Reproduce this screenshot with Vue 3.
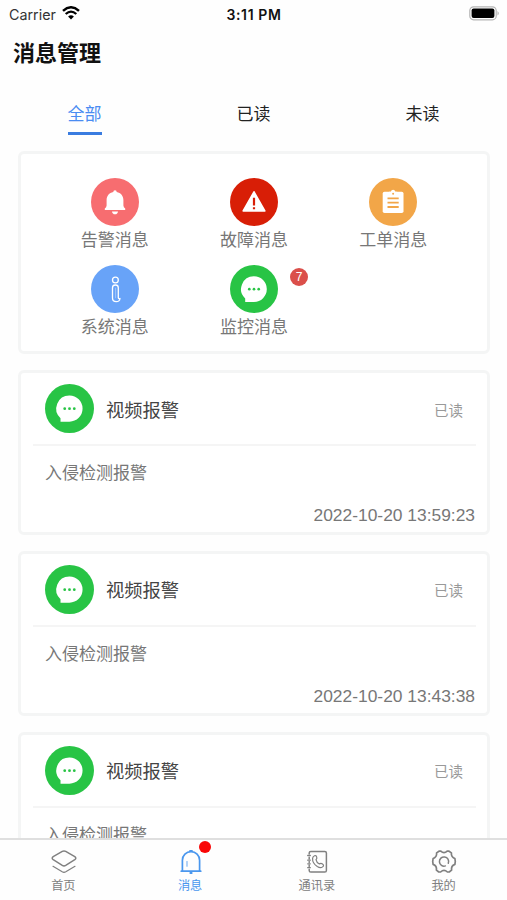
<script setup>
import { ref } from 'vue'

const tabs = ['全部', '已读', '未读']
const activeTab = ref(0)

const categories = [
  { name: '告警消息', icon: 'bell', color: '#f76d70' },
  { name: '故障消息', icon: 'warn', color: '#d81e06' },
  { name: '工单消息', icon: 'order', color: '#f2a648' },
  { name: '系统消息', icon: 'info', color: '#68a3f8' },
  { name: '监控消息', icon: 'chat', color: '#28c445', count: 7 }
]

const messages = [
  { id: 1, title: '视频报警', status: '已读', content: '入侵检测报警', time: '2022-10-20 13:59:23' },
  { id: 2, title: '视频报警', status: '已读', content: '入侵检测报警', time: '2022-10-20 13:43:38' },
  { id: 3, title: '视频报警', status: '已读', content: '入侵检测报警' }
]

const navs = [
  { name: '首页', icon: 'home' },
  { name: '消息', icon: 'message', dot: true },
  { name: '通讯录', icon: 'contacts' },
  { name: '我的', icon: 'mine' }
]
const activeNav = ref(1)
</script>

<template>
  <div class="page">
    <div class="status-bar">
      <div class="carrier">
        <span class="carrier-name">Carrier</span>
        <svg class="wifi" viewBox="0 0 18 14">
          <path d="M1 4.9 Q9 -2.3 17 4.9" fill="none" stroke="#000" stroke-width="2.5" />
          <path d="M3.7 8 Q9 3.2 14.3 8" fill="none" stroke="#000" stroke-width="2.3" />
          <path d="M6.1 10.4 Q9 7.9 11.9 10.4 L9 13.4 Z" fill="#000" />
        </svg>
      </div>
      <div class="clock">3:11 PM</div>
      <div class="battery">
        <svg viewBox="0 0 31 15">
          <rect x="0.8" y="0.8" width="26.4" height="13" rx="3.8" fill="#fff" stroke="#b5b5b5" stroke-width="1.2" />
          <rect x="2.6" y="2.6" width="22.8" height="9.4" rx="2" fill="#000" />
          <path d="M28.6 5 Q30.6 7.3 28.6 9.6 Z" fill="#999" />
        </svg>
      </div>
    </div>

    <h1 class="title">消息管理</h1>

    <div class="tabs">
      <div
        v-for="(tab, index) in tabs"
        :key="tab"
        class="tab"
        :class="{ active: activeTab === index }"
        @click="activeTab = index"
      >
        <span>{{ tab }}</span>
      </div>
    </div>

    <div class="content">
      <div class="card categories">
        <div v-for="item in categories" :key="item.name" class="category">
          <div class="category-icon">
            <svg viewBox="0 0 48 48">
              <circle cx="24" cy="24" r="24" :fill="item.color" />
              <g v-if="item.icon === 'bell'" fill="#fff">
                <path d="M24 12.2 a1.7 1.7 0 0 1 1.7 1.8 C29.9 14.9 32.4 18 32.4 22 V27.5 Q32.5 29.6 34.2 30.6 V32 H13.8 V30.6 Q15.5 29.6 15.6 27.5 V22 C15.6 18 18.1 14.9 22.3 14 A1.7 1.7 0 0 1 24 12.2 Z" />
                <path d="M21 33.4 H27 Q26.6 36.2 24 36.2 T21 33.4 Z" />
              </g>
              <g v-else-if="item.icon === 'warn'">
                <path d="M24 13.8 L34.8 33 H13.2 Z" fill="#fff" stroke="#fff" stroke-width="1.6" stroke-linejoin="round" />
                <path d="M24 19.7 V27.6 M24 29.3 V31.2" stroke="#d81e06" stroke-width="2.2" />
              </g>
              <g v-else-if="item.icon === 'order'">
                <rect x="13.7" y="13.8" width="20.8" height="21.2" rx="1.8" fill="#fff" />
                <path d="M20 15 V13.7 H21.8 Q22.3 11.7 24.1 11.7 T26.4 13.7 H28.2 V15 Z" fill="#fff" />
                <circle cx="24.1" cy="15.7" r="1" fill="#f2a648" />
                <path d="M18.5 20.3 H29.7 M18.5 24.7 H29.7 M18.5 29 H29.7" stroke="#f2a648" stroke-width="1.8" />
              </g>
              <g v-else-if="item.icon === 'info'" fill="none" stroke="#fff" stroke-width="1.3">
                <circle cx="24.4" cy="15" r="2.9" />
                <path d="M21.5 22.8 Q21.5 20 24.4 20 T27.3 22.8 V32.4 Q27.3 34 29 33.5 Q28.6 36.7 25.3 36.7 Q21.5 36.7 21.5 33 Z" stroke-linejoin="round" />
                <path d="M24.6 22.7 V33.2" stroke-width="0.7" opacity="0.55" />
              </g>
              <g v-else>
                <path d="M24 11.3 A12.8 12.8 0 1 1 24 36.9 H15.2 V33.5 A12.8 12.8 0 0 1 24 11.3 Z" fill="#fff" />
                <g fill="#28c445">
                  <circle cx="19.3" cy="24.2" r="1.35" />
                  <circle cx="24" cy="24.2" r="1.35" />
                  <circle cx="28.7" cy="24.2" r="1.35" />
                </g>
              </g>
            </svg>
            <span v-if="item.count" class="badge">{{ item.count }}</span>
          </div>
          <div class="category-name">{{ item.name }}</div>
        </div>
      </div>

      <div v-for="msg in messages" :key="msg.id" class="card message">
        <div class="message-head">
          <svg class="message-icon" viewBox="0 0 48 48">
            <circle cx="24" cy="24" r="24" fill="#28c445" />
            <path d="M24 11.3 A12.8 12.8 0 1 1 24 36.9 H15.2 V33.5 A12.8 12.8 0 0 1 24 11.3 Z" fill="#fff" />
            <g fill="#28c445">
              <circle cx="19.3" cy="24.2" r="1.35" />
              <circle cx="24" cy="24.2" r="1.35" />
              <circle cx="28.7" cy="24.2" r="1.35" />
            </g>
          </svg>
          <span class="message-title">{{ msg.title }}</span>
          <span class="message-status">{{ msg.status }}</span>
        </div>
        <div class="message-content">{{ msg.content }}</div>
        <div v-if="msg.time" class="message-time">{{ msg.time }}</div>
      </div>
    </div>

    <div class="nav">
      <div
        v-for="(item, index) in navs"
        :key="item.name"
        class="nav-item"
        :class="{ active: activeNav === index }"
        @click="activeNav = index"
      >
        <div class="nav-icon">
          <svg viewBox="0 0 26 26" fill="none" stroke="currentColor" stroke-width="1.5" stroke-linejoin="round" stroke-linecap="round">
            <g v-if="item.icon === 'home'">
              <path d="M11.3 2.4 Q13 1.5 14.7 2.4 L23.8 7.6 Q25.8 9.1 23.8 10.7 L14.7 16.4 Q13 17.4 11.3 16.4 L2.2 10.7 Q0.2 9.1 2.2 7.6 Z" />
              <path d="M2 17.3 L11.2 22.8 Q13 23.8 14.8 22.8 L24 17.3" stroke-width="1.2" />
            </g>
            <g v-else-if="item.icon === 'message'">
              <path d="M4.4 21.8 V11.3 A8.6 8.6 0 0 1 21.6 11.3 V21.8" stroke-width="1.7" />
              <path d="M3.3 22.2 H22.7" stroke-width="1.8" />
              <path d="M12 2 H14" stroke-width="1.8" />
              <path d="M12.4 24 H13.6" stroke-width="2" />
              <path d="M9 12.5 V17.2" stroke-width="1.2" opacity="0.7" />
            </g>
            <g v-else-if="item.icon === 'contacts'">
              <path d="M5.2 5 V4 Q5.2 2.4 6.8 2.4 H20.8 Q22.4 2.4 22.4 4 V21.4 Q22.4 23 20.8 23 H6.8 Q5.2 23 5.2 21.4 V20.2 M5.2 8.2 V10 M5.2 12.4 V13.6 M5.2 16 V17.4" />
              <path d="M3.7 6.5 H6.3 M3.7 11.2 H6.3 M3.7 14.8 H6.3 M3.7 18.7 H6.3" stroke-width="1.3" />
              <path d="M10.5 6.7 Q12.1 6.1 12.7 8 Q13.3 9.6 12 10.7 Q12.5 13.6 15.4 15 Q16.8 13.6 18.5 14.9 Q20.5 16.4 18.6 17.9 Q16.5 19.6 13.3 17.6 Q8.2 14 8.6 9.4 Q8.8 7.4 10.5 6.7 Z" stroke-width="1.2" />
            </g>
            <g v-else>
              <path d="M8 2.2 H9.8 Q13 5.2 16.2 2.2 H18 L20.4 3.9 Q20 8.2 23.9 9.6 L24.3 12.5 L23.9 15.4 Q19.9 17 20.6 21.1 L18.2 23 H16.4 Q13 19.8 9.6 23 H7.8 L5.4 21.1 Q6.1 17 2.1 15.4 L1.7 12.5 L2.1 9.6 Q6 8.2 5.6 3.9 Z" stroke-width="1.7" />
              <path d="M14.4 16.9 A4.6 4.6 0 1 1 17.3 14.2" stroke-width="1.5" />
            </g>
          </svg>
          <span v-if="item.dot" class="dot"></span>
        </div>
        <div class="nav-name">{{ item.name }}</div>
      </div>
    </div>
  </div>
</template>

<style>
body {
  margin: 0;
  background: #fff;
}
</style>

<style scoped>
.page {
  display: flex;
  flex-direction: column;
  height: 900px;
  overflow: hidden;
  box-sizing: border-box;
  background: #fefefe;
  font-family: "Liberation Sans", "Noto Sans CJK SC", sans-serif;
}

.status-bar {
  display: grid;
  grid-template-columns: 1fr auto 1fr;
  align-items: center;
  flex: none;
  height: 28px;
  padding: 0 7px 0 9px;
  font-family: Inter, sans-serif;
  font-size: 14px;
  color: #111;
}

.carrier {
  display: flex;
  align-items: center;
  gap: 6px;
}

.carrier-name {
  font-size: 14.3px;
  color: #333;
}

.wifi {
  width: 18px;
  height: 14px;
  margin-top: -2px;
}

.clock {
  font-weight: 600;
  letter-spacing: 0.6px;
  padding-right: 1px;
}

.battery {
  display: flex;
  justify-content: flex-end;
}

.battery svg {
  width: 31px;
  height: 15px;
  margin-top: -2px;
}

.title {
  flex: none;
  margin: 0;
  padding-left: 13px;
  height: 50px;
  line-height: 52px;
  font-size: 22px;
  font-weight: bold;
  color: #111;
}

.tabs {
  display: flex;
  flex: none;
  height: 73px;
}

.tab {
  flex: 1;
  display: flex;
  justify-content: center;
  align-items: flex-start;
  padding-top: 22px;
  font-size: 17px;
  line-height: 30px;
  color: #222;
  cursor: pointer;
}

.tab span {
  height: 32px;
  border-bottom: 3px solid transparent;
}

.tab.active {
  color: #4a8cf2;
}

.tab.active span {
  border-bottom-color: #3a7ce0;
}

.content {
  flex: 1;
  min-height: 0;
  overflow: hidden;
}

.card {
  box-sizing: border-box;
  margin: 0 17px 16px 18px;
  border: 3px solid #f4f5f5;
  border-radius: 6px;
  background: #fff;
}

.categories {
  display: grid;
  grid-template-columns: repeat(3, 139.3px);
  grid-auto-rows: 86.7px;
  justify-content: center;
  height: 203px;
  padding-top: 24px;
}

.category {
  display: flex;
  flex-direction: column;
  align-items: center;
}

.category-icon {
  position: relative;
  height: 48px;
}

.category-icon svg {
  display: block;
  width: 48px;
  height: 48px;
}

.badge {
  position: absolute;
  top: 3px;
  left: 60px;
  width: 18px;
  height: 18px;
  border-radius: 50%;
  background: #db4f4a;
  color: #fff;
  font-size: 12px;
  line-height: 18px;
  text-align: center;
}

.category-name {
  font-size: 17px;
  line-height: 30px;
  color: #777;
}

.message {
  height: 164.8px;
}

.message-head {
  display: flex;
  align-items: center;
  height: 71px;
  margin: 0 11px 0 12px;
  padding: 0 13px 0 12px;
  border-bottom: 2px solid #f5f5f5;
}

.message-icon {
  width: 49px;
  height: 49px;
}

.message-title {
  margin-left: 12px;
  font-size: 18.3px;
  color: #444;
}

.message-status {
  margin-left: auto;
  padding-top: 1px;
  font-size: 14.5px;
  color: #999;
}

.message-content {
  padding: 15px 24px 0;
  font-size: 17px;
  line-height: 26px;
  color: #777;
}

.message-time {
  margin-top: 17px;
  padding-right: 12px;
  font-size: 17.4px;
  line-height: 22px;
  text-align: right;
  color: #777;
}

.nav {
  display: flex;
  flex: none;
  height: 60px;
  border-top: 2px solid #dfdfdf;
  background: #fefefe;
}

.nav-item {
  flex: 1;
  display: flex;
  flex-direction: column;
  align-items: center;
  padding-top: 8px;
  color: #808080;
  cursor: pointer;
}

.nav-item.active {
  color: #4a97ee;
}

.nav-icon {
  position: relative;
  height: 26px;
  padding-top: 1px;
  padding-left: 1px;
}

.nav-icon svg {
  display: block;
  width: 26px;
  height: 26px;
}

.dot {
  position: absolute;
  top: -7px;
  left: 22px;
  width: 12px;
  height: 12px;
  border-radius: 50%;
  background: #f90606;
}

.nav-name {
  margin-top: 2px;
  font-size: 12.2px;
  line-height: 18px;
}
</style>
